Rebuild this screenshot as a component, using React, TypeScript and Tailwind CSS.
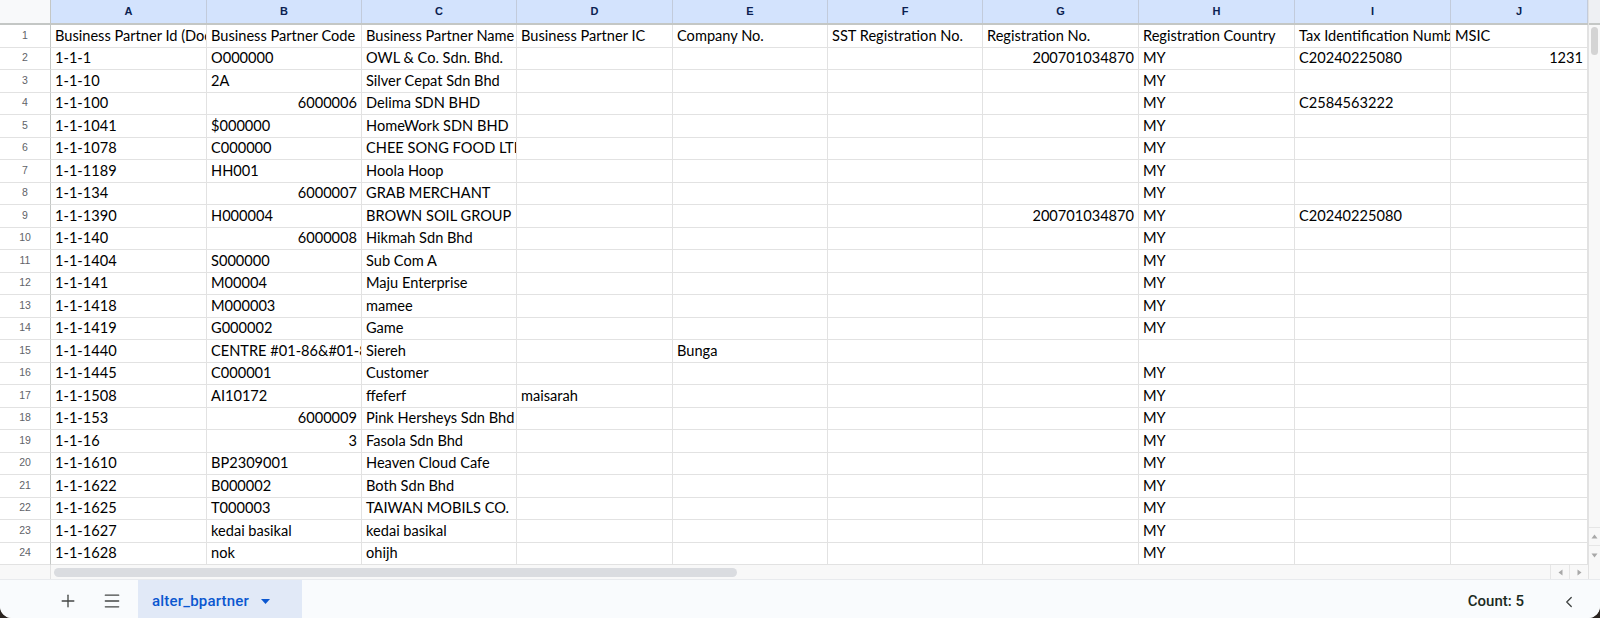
import React from 'react';
import { Plus, Menu, ChevronLeft } from 'lucide-react';

type Cell = string | { v: string; right: true };

const num = (v: string): Cell => ({ v, right: true });

const columns = ['A', 'B', 'C', 'D', 'E', 'F', 'G', 'H', 'I', 'J'];

const rows: Cell[][] = [
  ['Business Partner Id (Document No)', 'Business Partner Code', 'Business Partner Name', 'Business Partner IC', 'Company No.', 'SST Registration No.', 'Registration No.', 'Registration Country', 'Tax Identification Number', 'MSIC'],
  ['1-1-1', 'O000000', 'OWL & Co. Sdn. Bhd.', '', '', '', num('200701034870'), 'MY', 'C20240225080', num('1231')],
  ['1-1-10', '2A', 'Silver Cepat Sdn Bhd', '', '', '', '', 'MY', '', ''],
  ['1-1-100', num('6000006'), 'Delima SDN BHD', '', '', '', '', 'MY', 'C2584563222', ''],
  ['1-1-1041', '$000000', 'HomeWork SDN BHD', '', '', '', '', 'MY', '', ''],
  ['1-1-1078', 'C000000', 'CHEE SONG FOOD LTE', '', '', '', '', 'MY', '', ''],
  ['1-1-1189', 'HH001', 'Hoola Hoop', '', '', '', '', 'MY', '', ''],
  ['1-1-134', num('6000007'), 'GRAB MERCHANT', '', '', '', '', 'MY', '', ''],
  ['1-1-1390', 'H000004', 'BROWN SOIL GROUP', '', '', '', num('200701034870'), 'MY', 'C20240225080', ''],
  ['1-1-140', num('6000008'), 'Hikmah Sdn Bhd', '', '', '', '', 'MY', '', ''],
  ['1-1-1404', 'S000000', 'Sub Com A', '', '', '', '', 'MY', '', ''],
  ['1-1-141', 'M00004', 'Maju Enterprise', '', '', '', '', 'MY', '', ''],
  ['1-1-1418', 'M000003', 'mamee', '', '', '', '', 'MY', '', ''],
  ['1-1-1419', 'G000002', 'Game', '', '', '', '', 'MY', '', ''],
  ['1-1-1440', 'CENTRE #01-86&#01-87', 'Siereh', '', 'Bunga', '', '', '', '', ''],
  ['1-1-1445', 'C000001', 'Customer', '', '', '', '', 'MY', '', ''],
  ['1-1-1508', 'AI10172', 'ffeferf', 'maisarah', '', '', '', 'MY', '', ''],
  ['1-1-153', num('6000009'), 'Pink Hersheys Sdn Bhd', '', '', '', '', 'MY', '', ''],
  ['1-1-16', num('3'), 'Fasola Sdn Bhd', '', '', '', '', 'MY', '', ''],
  ['1-1-1610', 'BP2309001', 'Heaven Cloud Cafe', '', '', '', '', 'MY', '', ''],
  ['1-1-1622', 'B000002', 'Both Sdn Bhd', '', '', '', '', 'MY', '', ''],
  ['1-1-1625', 'T000003', 'TAIWAN MOBILS CO.', '', '', '', '', 'MY', '', ''],
  ['1-1-1627', 'kedai basikal', 'kedai basikal', '', '', '', '', 'MY', '', ''],
  ['1-1-1628', 'nok', 'ohijh', '', '', '', '', 'MY', '', ''],
];

const gridCols = 'grid grid-cols-[51px_156px_155px_155px_156px_155px_155px_156px_156px_156px_137px]';

function DataCell({ cell }: { cell: Cell }) {
  const right = typeof cell !== 'string';
  const text = typeof cell === 'string' ? cell : cell.v;
  return (
    <div
      className={`flex items-center overflow-hidden whitespace-nowrap border-r border-b border-[#e2e2e2] text-[14.6px] text-black ${
        right ? 'justify-end pr-[4px]' : 'pl-[4px]'
      }`}
    >
      {text}
    </div>
  );
}

export default function App() {
  return (
    <div className="w-[1600px] h-[618px] bg-[#2a2420] overflow-hidden" style={{ fontFamily: 'Lato, "Liberation Sans", sans-serif' }}>
      <div className="w-full h-full bg-white rounded-b-[12px] overflow-hidden flex flex-col">
        {/* sheet area */}
        <div className="flex h-[565px]">
          <div className="w-[1588px] flex flex-col">
            {/* column headers */}
            <div className={`${gridCols} h-[25px] border-b-2 border-[#c4c7c5]`}>
              <div className="bg-[#f8f9fa] border-r border-[#c4c7c5]" />
              {columns.map((c) => (
                <div
                  key={c}
                  className="flex items-center justify-center bg-[#d3e3fd] border-r border-[#c2cbdb] text-[11px] font-bold text-[#0b1f51]"
                  style={{ fontFamily: '"Liberation Sans", Arial, sans-serif' }}
                >
                  {c}
                </div>
              ))}
            </div>
            {/* rows */}
            {rows.map((row, i) => (
              <div key={i} className={`${gridCols} h-[22.5px]`}>
                <div
                  className="flex items-center justify-center bg-white border-r border-b border-[#c4c7c5] border-b-[#e2e2e2] text-[10.5px] text-[#5f6368]"
                  style={{ fontFamily: '"Liberation Sans", Arial, sans-serif' }}
                >
                  {i + 1}
                </div>
                {row.map((cell, j) => (
                  <DataCell key={j} cell={cell} />
                ))}
              </div>
            ))}
          </div>
          {/* vertical scrollbar */}
          <div className="w-[12px] flex flex-col bg-[#f8f8f8] border-l border-[#e2e2e2]">
            <div className="h-[25px] bg-[#eef0f3] border-b-2 border-[#c4c7c5]" />
            <div className="flex-1 pt-[2px] px-[2px]">
              <div className="h-[28px] rounded-full bg-[#d4d4d4]" />
            </div>
            <div className="h-[18px] flex items-center justify-center border-t border-[#e6e6e6]">
              <svg width="7" height="5" viewBox="0 0 7 5"><path d="M3.5 0.5 L6.5 4.5 L0.5 4.5 Z" fill="#a8a8a8" /></svg>
            </div>
            <div className="h-[20px] flex items-center justify-center border-t border-[#e6e6e6]">
              <svg width="7" height="5" viewBox="0 0 7 5"><path d="M0.5 0.5 L6.5 0.5 L3.5 4.5 Z" fill="#a8a8a8" /></svg>
            </div>
          </div>
        </div>
        {/* horizontal scrollbar */}
        <div className="flex h-[15px] bg-[#f8f8f8] border-b border-[#e8eaed]">
          <div className="w-[51px] bg-[#f8f8f8] border-r border-[#e2e2e2]" />
          <div className="flex-1 flex items-center pl-[3px]">
            <div className="w-[683px] h-[9px] rounded-full bg-[#dadce0]" />
          </div>
          <div className="w-[19px] flex items-center justify-center border-l border-[#e6e6e6]">
            <svg width="5" height="7" viewBox="0 0 5 7"><path d="M4.5 0.5 L4.5 6.5 L0.5 3.5 Z" fill="#a8a8a8" /></svg>
          </div>
          <div className="w-[19px] flex items-center justify-center border-l border-[#e6e6e6]">
            <svg width="5" height="7" viewBox="0 0 5 7"><path d="M0.5 0.5 L4.5 3.5 L0.5 6.5 Z" fill="#a8a8a8" /></svg>
          </div>
          <div className="w-[12px] bg-[#f8f8f8] border-l border-[#e2e2e2]" />
        </div>
        {/* sheet tabs bar */}
        <div className="flex-1 flex items-stretch bg-[#f9fbfd]" style={{ fontFamily: 'Roboto, "Liberation Sans", sans-serif' }}>
          <div className="flex items-center pl-[58px] gap-[24px] pt-[4px]">
            <Plus size={20} strokeWidth={1.6} className="text-[#444746]" />
            <Menu size={20} strokeWidth={1.6} className="text-[#444746]" />
          </div>
          <div className="ml-[16px] w-[164px] bg-[#e1e9f7] flex items-center pl-[14px] pt-[4px] gap-[12px]">
            <span className="text-[15px] font-medium text-[#0b57d0] tracking-[0.2px]">alter_bpartner</span>
            <svg width="9" height="5" viewBox="0 0 9 5"><path d="M0 0 L9 0 L4.5 5 Z" fill="#0b57d0" /></svg>
          </div>
          <div className="flex-1" />
          <div className="flex items-center pt-[4px] pr-[24px]">
            <span className="text-[15px] font-medium text-[#1b2a21]">Count: 5</span>
          </div>
          <div className="flex items-center pt-[6px] pr-[22px] pl-[12px]">
            <ChevronLeft size={18} strokeWidth={1.8} className="text-[#444746]" />
          </div>
        </div>
      </div>
    </div>
  );
}
